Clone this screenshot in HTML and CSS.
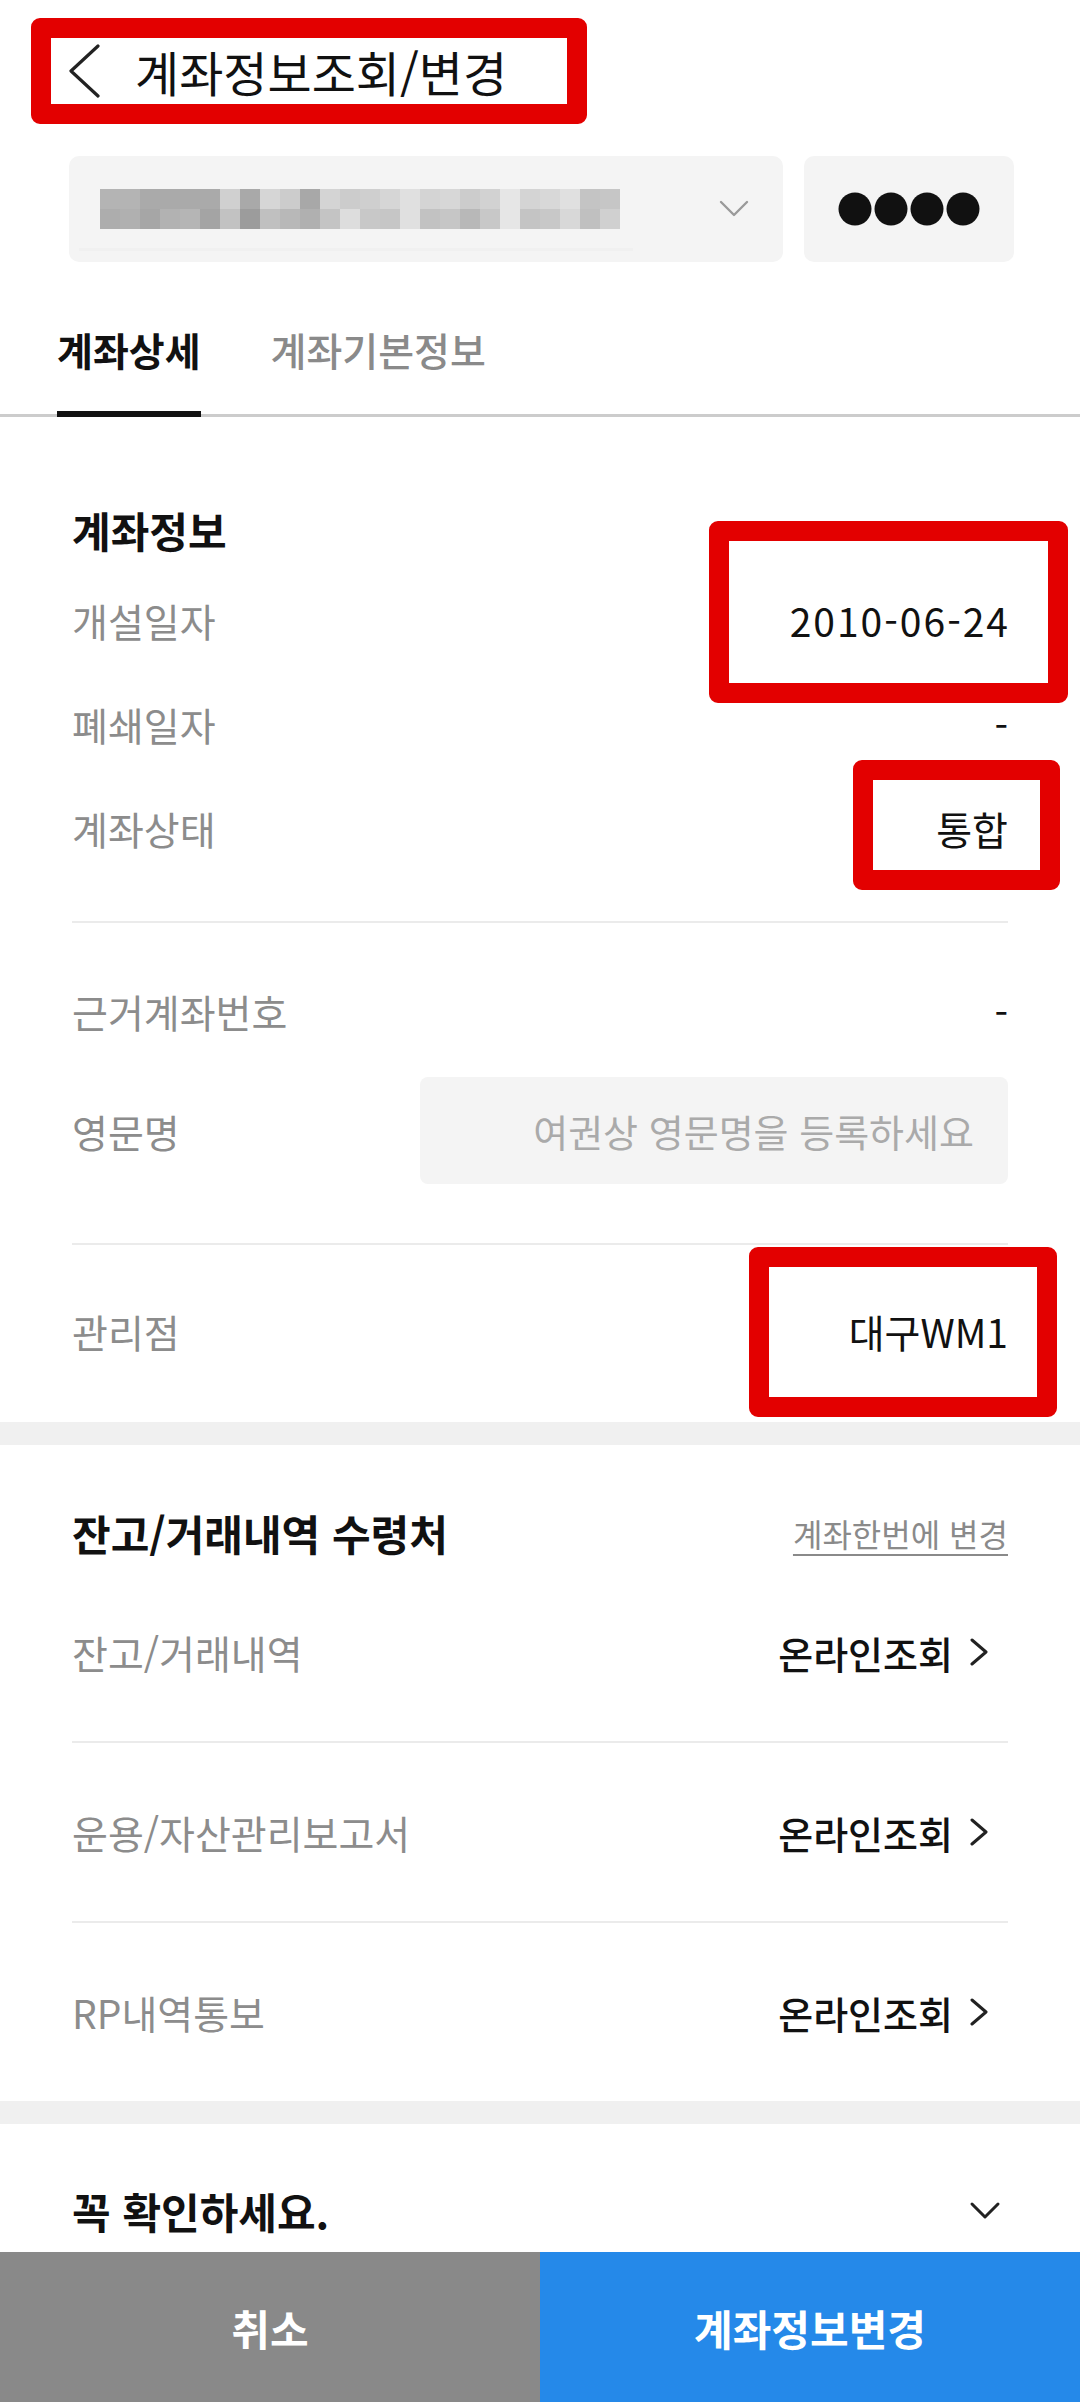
FILE: index.html
```html
<!DOCTYPE html>
<html lang="ko">
<head>
<meta charset="utf-8">
<title>계좌정보조회/변경</title>
<link rel="stylesheet" href="styles.css">
</head>
<body>
<div class="page">
  <header class="topbar">
    <div class="titlebox">
      <svg class="back" width="32" height="54" viewBox="0 0 32 54"><polyline points="29,2 2,27 29,52" fill="none" stroke="#222" stroke-width="3.2" stroke-linecap="round" stroke-linejoin="round"/></svg>
      <h1 class="title">계좌정보조회/변경</h1>
    </div>
  </header>

  <div class="account-row">
    <div class="select">
      <div class="mosaic"></div>
      <svg class="sel-chev" width="30" height="18" viewBox="0 0 30 18"><polyline points="2,2 15,15 28,2" fill="none" stroke="#9a9a9a" stroke-width="2.4" stroke-linecap="round" stroke-linejoin="round"/></svg>
    </div>
    <div class="pin">
      <svg width="142" height="34" viewBox="0 0 142 34"><circle cx="17" cy="17" r="16.5" fill="#111"/><circle cx="53" cy="17" r="16.5" fill="#111"/><circle cx="89" cy="17" r="16.5" fill="#111"/><circle cx="125" cy="17" r="16.5" fill="#111"/></svg>
    </div>
  </div>

  <nav class="tabs">
    <span class="tab active">계좌상세</span>
    <span class="tab">계좌기본정보</span>
  </nav>

  <section class="card card-info">
    <h2 class="sec-title">계좌정보</h2>
    <div class="row"><span class="label">개설일자</span><span class="value num">2010-06-24</span><span class="mark mark-date"></span></div>
    <div class="row"><span class="label">폐쇄일자</span><span class="value">-</span></div>
    <div class="row"><span class="label">계좌상태</span><span class="value">통합</span><span class="mark mark-state"></span></div>
    <div class="divider d1"></div>
    <div class="row r-base"><span class="label">근거계좌번호</span><span class="value">-</span></div>
    <div class="row r-eng"><span class="label">영문명</span><input class="eng-input" type="text" placeholder="여권상 영문명을 등록하세요"></div>
    <div class="divider d2"></div>
    <div class="row r-branch"><span class="label">관리점</span><span class="value">대구WM1</span><span class="mark mark-branch"></span></div>
  </section>

  <div class="band"></div>

  <section class="card card-recv">
    <div class="sec-head">
      <h2 class="sec-title">잔고/거래내역 수령처</h2>
      <span class="link">계좌한번에 변경</span>
    </div>
    <div class="row tall"><span class="label">잔고/거래내역</span><span class="go">온라인조회<svg width="22" height="28" viewBox="0 0 22 28"><polyline points="4,2 18,14 4,26" fill="none" stroke="#222" stroke-width="3" stroke-linecap="round" stroke-linejoin="round"/></svg></span></div>
    <div class="divider"></div>
    <div class="row tall"><span class="label">운용/자산관리보고서</span><span class="go">온라인조회<svg width="22" height="28" viewBox="0 0 22 28"><polyline points="4,2 18,14 4,26" fill="none" stroke="#222" stroke-width="3" stroke-linecap="round" stroke-linejoin="round"/></svg></span></div>
    <div class="divider"></div>
    <div class="row tall"><span class="label">RP내역통보</span><span class="go">온라인조회<svg width="22" height="28" viewBox="0 0 22 28"><polyline points="4,2 18,14 4,26" fill="none" stroke="#222" stroke-width="3" stroke-linecap="round" stroke-linejoin="round"/></svg></span></div>
  </section>

  <div class="band"></div>

  <section class="card card-check">
    <div class="sec-head">
      <h2 class="sec-title">꼭 확인하세요.</h2>
      <svg class="down" width="32" height="20" viewBox="0 0 32 20"><polyline points="3,3 16,16 29,3" fill="none" stroke="#222" stroke-width="3" stroke-linecap="round" stroke-linejoin="round"/></svg>
    </div>
  </section>

  <footer class="actions">
    <button class="btn btn-cancel" type="button">취소</button>
    <button class="btn btn-ok" type="button">계좌정보변경</button>
  </footer>
</div>
</body>
</html>
```

FILE: styles.css
```css
* { box-sizing: border-box; }

html, body {
  margin: 0;
  padding: 0;
  background: #fff;
}

body {
  font-family: "Noto Sans CJK KR", "Noto Sans", sans-serif;
  color: #111;
}

.page {
  width: 1080px;
  height: 2402px;
  overflow: hidden;
}

/* header */
.topbar {
  padding: 18px 0 0 31px;
}

.titlebox {
  width: 556px;
  height: 106px;
  border: 20px solid #e30000;
  border-radius: 9px;
  display: flex;
  align-items: center;
  padding-left: 18px;
}

.back {
  display: block;
  flex: none;
}

.title {
  margin: 0 0 0 34px;
  font-size: 48px;
  line-height: 66px;
  font-weight: 400;
  color: #111;
  white-space: nowrap;
}

/* account selector */
.account-row {
  display: flex;
  gap: 21px;
  margin-top: 32px;
  padding: 0 66px 0 69px;
  height: 106px;
}

.select {
  position: relative;
  flex: none;
  width: 714px;
  height: 106px;
  background: #f4f4f4;
  border-radius: 10px;
  display: flex;
  align-items: center;
  justify-content: space-between;
  padding: 0 34px 0 31px;
}

.select::after {
  content: "";
  position: absolute;
  left: 10px;
  top: 92px;
  width: 554px;
  height: 3px;
  background: #f0f0f0;
}

.mosaic {
  width: 520px;
  height: 40px;
  background:
    linear-gradient(90deg, #b4b4b4 0 40px, #aaaaaa 40px 120px, #d0d0d0 120px 140px, #a9a9a9 140px 160px, #d6d6d6 160px 180px, #cccccc 180px 200px, #a8a8a8 200px 220px, #d4d4d4 220px 240px, #cccccc 240px 260px, #cfcfcf 260px 280px, #d6d6d6 280px 300px, #e0e0e0 300px 320px, #d4d4d4 320px 340px, #d7d7d7 340px 360px, #cccccc 360px 380px, #d2d2d2 380px 400px, #e6e6e6 400px 420px, #d4d4d4 420px 440px, #d8d8d8 440px 460px, #e0e0e0 460px 480px, #c4c4c4 480px 500px, #c6c6c6 500px 520px) top left / 520px 20px no-repeat,
    linear-gradient(90deg, #adadad 0 20px, #b0b0b0 20px 40px, #a6a6a6 40px 60px, #b2b2b2 60px 80px, #b5b5b5 80px 100px, #a4a4a4 100px 120px, #c2c2c2 120px 140px, #9c9c9c 140px 160px, #c0c0c0 160px 180px, #b8b8b8 180px 200px, #b0b0b0 200px 220px, #c4c4c4 220px 240px, #dddddd 240px 260px, #c8c8c8 260px 280px, #c6c6c6 280px 300px, #e0e0e0 300px 320px, #c2c2c2 320px 340px, #c6c6c6 340px 360px, #b8b8b8 360px 380px, #c8c8c8 380px 400px, #e6e6e6 400px 420px, #c4c4c4 420px 440px, #c8c8c8 440px 460px, #d8d8d8 460px 480px, #c0c0c0 480px 500px, #d0d0d0 500px 520px) bottom left / 520px 20px no-repeat;
}

.sel-chev { display: block; flex: none; }

.pin {
  flex: none;
  width: 210px;
  height: 106px;
  background: #f4f4f4;
  border-radius: 10px;
  display: flex;
  align-items: center;
  justify-content: center;
}

.pin svg { display: block; }

/* tabs */
.tabs {
  display: flex;
  gap: 70px;
  padding-left: 57px;
  border-bottom: 3px solid #cccccc;
}

.tab {
  font-size: 39px;
  line-height: 52px;
  padding: 61px 0 36px;
  border-bottom: 6px solid transparent;
  margin-bottom: -3px;
  color: #8a8a8a;
  font-weight: 500;
  white-space: nowrap;
}

.tab.active {
  color: #111;
  font-weight: 700;
  border-bottom-color: #111;
}

/* cards */
.card {
  padding: 0 72px;
}

.card-info {
  padding-top: 83px;
  padding-bottom: 39px;
}

.sec-title {
  margin: 0;
  font-size: 42px;
  line-height: 60px;
  font-weight: 700;
  color: #111;
  white-space: nowrap;
}

.card-info .sec-title {
  margin-bottom: 8px;
}

.row {
  position: relative;
  display: flex;
  justify-content: space-between;
  align-items: center;
  height: 104px;
}

.label {
  font-size: 39px;
  color: #8c8c8c;
  white-space: nowrap;
}

.value {
  font-size: 39px;
  color: #111;
  white-space: nowrap;
}

.num {
  letter-spacing: 2px;
  margin-right: -2px;
}

.divider {
  height: 2px;
  background: #ebebeb;
}

.d1 { margin-top: 41px; }
.r-base { margin-top: 36px; }
.r-eng { margin-top: 14px; height: 107px; }
.d2 { margin-top: 59px; }
.r-branch { margin-top: 34px; }

.eng-input {
  width: 588px;
  height: 107px;
  border: none;
  border-radius: 8px;
  background: #f4f4f4;
  padding: 0 34px 0 20px;
  text-align: right;
  font-family: inherit;
  font-size: 38px;
  color: #111;
  outline: none;
}

.eng-input::placeholder {
  color: #aaaaaa;
  opacity: 1;
}

/* red annotation marks */
.mark {
  position: absolute;
  border: 20px solid #e30000;
  border-radius: 9px;
  pointer-events: none;
}

.mark-date {
  top: -47px;
  right: -60px;
  width: 359px;
  height: 182px;
}

.mark-state {
  top: -16px;
  right: -52px;
  width: 207px;
  height: 130px;
}

.mark-branch {
  top: -32px;
  right: -49px;
  width: 308px;
  height: 170px;
}

.band {
  height: 23px;
  background: #f0f0f0;
}

/* receiving section */
.card-recv {
  padding-top: 58px;
}

.sec-head {
  display: flex;
  justify-content: space-between;
  align-items: center;
  height: 60px;
}

.link {
  font-size: 32px;
  color: #8a8a8a;
  text-decoration: underline;
  text-underline-offset: 7px;
  text-decoration-thickness: 2px;
  white-space: nowrap;
}

.row.tall {
  height: 178px;
}

.go {
  display: flex;
  align-items: center;
  font-size: 38px;
  font-weight: 500;
  color: #111;
  white-space: nowrap;
  padding-right: 18px;
}

.go svg {
  display: block;
  margin-left: 15px;
}

/* check section */
.card-check {
  padding-top: 57px;
  padding-bottom: 11px;
}

.down {
  display: block;
  margin-right: 7px;
}

/* bottom buttons */
.actions {
  display: grid;
  grid-template-columns: 540px 540px;
  height: 150px;
}

.btn {
  border: none;
  margin: 0;
  padding: 0;
  font-family: inherit;
  font-size: 42px;
  font-weight: 700;
  color: #fff;
}

.btn-cancel { background: #898989; }
.btn-ok { background: #2589e9; }
```
